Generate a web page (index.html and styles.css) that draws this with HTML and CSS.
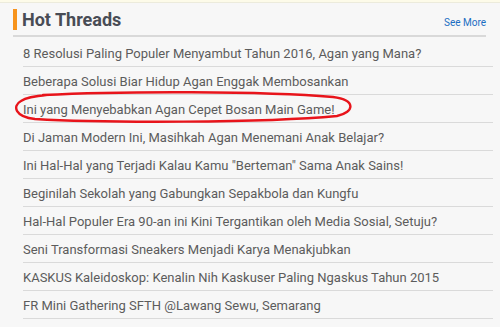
FILE: index.html
```html
<!DOCTYPE html>
<html lang="en">
<head>
    <meta charset="UTF-8">
    <title>Hot Threads</title>
    <link rel="stylesheet" href="styles.css">
</head>
<body>
    <div class="top-strip"></div>
    <div class="hot-threads">
        <div class="ht-header">
            <h2 class="ht-title">Hot Threads</h2>
            <a class="see-more" href="#">See More</a>
        </div>
        <ul class="ht-list">
            <li><a href="#">8 Resolusi Paling Populer Menyambut Tahun 2016, Agan yang Mana?</a></li>
            <li><a href="#">Beberapa Solusi Biar Hidup Agan Enggak Membosankan</a></li>
            <li class="marked"><a href="#">Ini yang Menyebabkan Agan Cepet Bosan Main Game!</a>
                <svg class="scribble" width="344" height="34" viewBox="0 0 344 34">
                    <path d="M30 4 C 110 0, 250 0, 320 6 C 343 9, 342 21, 324 25 C 250 32, 90 32, 22 28 C 2 26, -1 15, 8 10 C 14 6, 22 5, 34 4" fill="none" stroke="#e8141b" stroke-width="2.4" stroke-linecap="round"/>
                </svg>
            </li>
            <li><a href="#">Di Jaman Modern Ini, Masihkah Agan Menemani Anak Belajar?</a></li>
            <li><a href="#">Ini Hal-Hal yang Terjadi Kalau Kamu "Berteman" Sama Anak Sains!</a></li>
            <li><a href="#">Beginilah Sekolah yang Gabungkan Sepakbola dan Kungfu</a></li>
            <li><a href="#">Hal-Hal Populer Era 90-an ini Kini Tergantikan oleh Media Sosial, Setuju?</a></li>
            <li><a href="#">Seni Transformasi Sneakers Menjadi Karya Menakjubkan</a></li>
            <li><a href="#">KASKUS Kaleidoskop: Kenalin Nih Kaskuser Paling Ngaskus Tahun 2015</a></li>
            <li><a href="#">FR Mini Gathering SFTH @Lawang Sewu, Semarang</a></li>
        </ul>
    </div>
</body>
</html>
```

FILE: styles.css
```css
body {
    margin: 0;
    padding: 0;
    background-color: #f7f7f7;
    font-family: Roboto, "Liberation Sans", sans-serif;
}

.top-strip {
    height: 2px;
    background-color: #fdfbe9;
    border-bottom: 1px solid #ecebdc;
}

.hot-threads {
    padding: 0 7px 0 13px;
}

.ht-header {
    display: flex;
    justify-content: space-between;
    align-items: flex-end;
    margin-right: 7px;
    padding-top: 6px;
    padding-bottom: 5px;
    border-bottom: 2px solid #d9d9d9;
}

.ht-title {
    margin: 0;
    padding-left: 5px;
    border-left: 4px solid #f7941d;
    font-size: 18px;
    line-height: 21px;
    font-weight: bold;
    color: #484c55;
}

.see-more {
    font-size: 10px;
    color: #1b6ec2;
    text-decoration: none;
    padding-bottom: 2px;
}

.ht-list {
    list-style: none;
    margin: 2px 0 0 10px;
    padding: 0;
}

.ht-list li {
    position: relative;
    height: 27px;
    line-height: 27px;
    border-bottom: 1px solid #dadada;
}

.ht-list a {
    font-size: 13px;
    color: #5c5c5c;
    text-decoration: none;
}

.scribble {
    position: absolute;
    left: -10px;
    top: -4px;
}
```
